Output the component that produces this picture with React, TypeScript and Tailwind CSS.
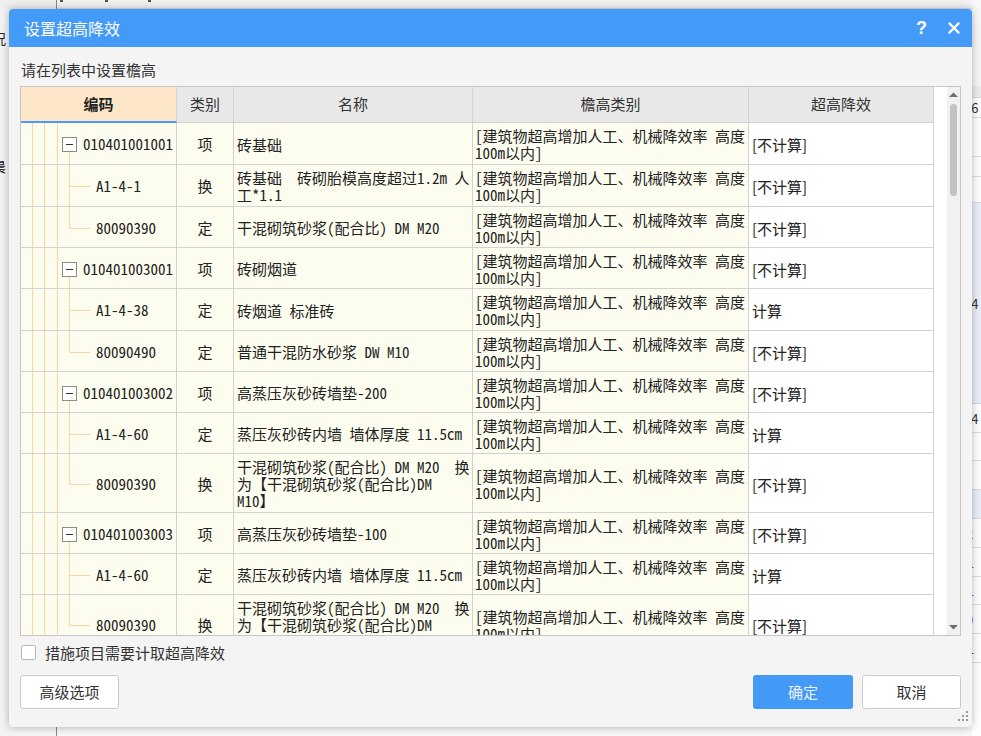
import React from 'react';

type Row = {
  t: 'p' | 'c' | 'l';
  code: string;
  cat: string;
  name: string[];
  eff: string;
  h: number;
};

const ROWS: Row[] = [
  { t: 'p', code: '010401001001', cat: '项', name: ['砖基础'], eff: '[不计算]', h: 42 },
  { t: 'c', code: 'A1-4-1', cat: '换', name: ['砖基础  砖砌胎模高度超过1.2m 人', '工*1.1'], eff: '[不计算]', h: 42 },
  { t: 'l', code: '80090390', cat: '定', name: ['干混砌筑砂浆(配合比) DM M20'], eff: '[不计算]', h: 41 },
  { t: 'p', code: '010401003001', cat: '项', name: ['砖砌烟道'], eff: '[不计算]', h: 41 },
  { t: 'c', code: 'A1-4-38', cat: '定', name: ['砖烟道 标准砖'], eff: '计算', h: 42 },
  { t: 'l', code: '80090490', cat: '定', name: ['普通干混防水砂浆 DW M10'], eff: '[不计算]', h: 41 },
  { t: 'p', code: '010401003002', cat: '项', name: ['高蒸压灰砂砖墙垫-200'], eff: '[不计算]', h: 41 },
  { t: 'c', code: 'A1-4-60', cat: '定', name: ['蒸压灰砂砖内墙 墙体厚度 11.5cm'], eff: '计算', h: 41 },
  {
    t: 'l',
    code: '80090390',
    cat: '换',
    name: ['干混砌筑砂浆(配合比) DM M20  换', '为【干混砌筑砂浆(配合比)DM', 'M10】'],
    eff: '[不计算]',
    h: 59,
  },
  { t: 'p', code: '010401003003', cat: '项', name: ['高蒸压灰砂砖墙垫-100'], eff: '[不计算]', h: 41 },
  { t: 'c', code: 'A1-4-60', cat: '定', name: ['蒸压灰砂砖内墙 墙体厚度 11.5cm'], eff: '计算', h: 41 },
  {
    t: 'l',
    code: '80090390',
    cat: '换',
    name: ['干混砌筑砂浆(配合比) DM M20  换', '为【干混砌筑砂浆(配合比)DM', 'M10】'],
    eff: '[不计算]',
    h: 59,
  },
];

const HCLS: Record<number, string> = {
  41: 'h-[41px]',
  42: 'h-[42px]',
  59: 'h-[59px]',
};

const LINE = '#fdd49b';

function TreeSvg({ t, h }: { t: Row['t']; h: number }) {
  const ih = h - 1;
  const c = Math.floor(ih / 2) + 1.5;
  const w = t === 'p' ? 62 : 75;
  return (
    <svg width={w} height={ih} className="shrink-0 block">
      <line x1={11.5} y1={0} x2={11.5} y2={ih} stroke={LINE} strokeWidth={1} />
      <line x1={23.5} y1={0} x2={23.5} y2={ih} stroke={LINE} strokeWidth={1} />
      <line x1={36.5} y1={0} x2={36.5} y2={ih} stroke={LINE} strokeWidth={1} />
      {t === 'p' ? (
        <>
          <line x1={48.5} y1={c + 7} x2={48.5} y2={ih} stroke={LINE} strokeWidth={1} />
          <rect x={41.5} y={c - 7} width={14} height={14} fill="#ffffff" stroke="#8c8c8c" strokeWidth={1} />
          <line x1={45} y1={c} x2={52} y2={c} stroke="#333333" strokeWidth={1} />
        </>
      ) : (
        <>
          <line x1={48.5} y1={0} x2={48.5} y2={t === 'l' ? c : ih} stroke={LINE} strokeWidth={1} />
          <line x1={48.5} y1={c} x2={69} y2={c} stroke={LINE} strokeWidth={1} />
        </>
      )}
    </svg>
  );
}

const MONO = "font-['Noto_Sans_Mono_CJK_SC','Noto_Sans_CJK_SC',monospace]";

function TableRow({ r }: { r: Row }) {
  return (
    <div className={`flex ${HCLS[r.h]} border-b border-[#d2d2d2] text-[15px] text-[#222]`}>
      <div className="w-[156px] shrink-0 flex items-stretch border-r border-[#d2d2d2] bg-[#fdfdef]">
        <TreeSvg t={r.t} h={r.h} />
        <div className={`flex items-center pt-[2px] whitespace-nowrap ${MONO}`}>{r.code}</div>
      </div>
      <div className="w-[57px] shrink-0 flex items-center justify-center pt-[2px] border-r border-[#d2d2d2] bg-[#fdfdef]">
        {r.cat}
      </div>
      <div
        className={`w-[239px] shrink-0 flex flex-col justify-center pl-[3px] pt-[1px] leading-[17px] border-r border-[#d2d2d2] bg-[#fdfdef] whitespace-pre ${MONO}`}
      >
        {r.name.map((n, i) => (
          <div key={i}>{n}</div>
        ))}
      </div>
      <div
        className={`w-[276px] shrink-0 flex flex-col justify-center pl-[2px] pt-[1px] leading-[17px] border-r border-[#d2d2d2] bg-[#fdfdef] whitespace-pre ${MONO}`}
      >
        <div>[建筑物超高增加人工、机械降效率 高度</div>
        <div>100m以内]</div>
      </div>
      <div className="w-[185px] shrink-0 flex items-center pl-[3px] pt-[4px] border-r border-[#d2d2d2] bg-white">
        {r.eff}
      </div>
    </div>
  );
}

function RightStrip() {
  return (
    <div className="w-[9px] flex flex-col text-[13px] leading-none text-[#333] overflow-hidden">
      <div className="h-[86px] bg-[#f7f7f7]" />
      <div className="h-[12px] bg-[#ececec] border-b border-[#d6d6d6]" />
      <div className="h-[20px] border-b border-[#dcdcdc] flex items-center -ml-[8px]">96</div>
      <div className="h-[39px] border-b border-[#dcdcdc]" />
      <div className="h-[20px] border-b border-[#dcdcdc]" />
      <div className="h-[26px] border-b border-[#dcdcdc]" />
      <div className="h-[201px] bg-[#e9eef8] border-b border-[#d0d6e2] flex items-center -ml-[8px]">04</div>
      <div className="h-[29px] border-b border-[#dcdcdc] flex items-center -ml-[8px]">04</div>
      <div className="h-[28px] border-b border-[#dcdcdc]" />
      <div className="h-[29px] border-b border-[#dcdcdc]" />
      <div className="h-[29px] bg-[#e9eef8] border-b border-[#dcdcdc]" />
      <div className="h-[29px] border-b border-[#dcdcdc] flex items-center -ml-[6px]">2</div>
      <div className="h-[29px] border-b border-[#dcdcdc] flex items-center -ml-[5px] text-[#9b30c0]">1</div>
      <div className="h-[28px] border-b border-[#dcdcdc] flex items-center -ml-[5px] text-[#9b30c0]">1</div>
      <div className="h-[29px] border-b border-[#dcdcdc] flex items-center -ml-[6px] text-[#9b30c0]">0</div>
      <div className="h-[29px] border-b border-[#dcdcdc] flex items-center -ml-[5px]">1</div>
      <div className="flex-1" />
    </div>
  );
}

export default function App() {
  return (
    <div className="relative w-[981px] h-[736px] overflow-hidden bg-white font-['Noto_Sans_CJK_SC',sans-serif] text-[#333]">
      {/* background application */}
      <div className="flex h-full">
        <div className="w-[57px] shrink-0 border-r border-[#8a8a8a] bg-[#f4f4f4] flex flex-col text-[14px] text-[#222]">
          <div className="h-[9px] bg-[#efefef]" />
          <div className="h-[20px]" />
          <div className="h-[18px] -ml-[8px] leading-[18px]">况</div>
          <div className="h-[110px]" />
          <div className="h-[18px] -ml-[8px] leading-[18px]">晨</div>
        </div>
        <div className="flex-1 flex flex-col">
          <div className="h-[9px] bg-[#f3f3f3] border-b border-[#dedede] flex">
            <div className="w-[3px]" />
            <div className="w-[3px] h-[2px] bg-[#555]" />
            <div className="w-[42px]" />
            <div className="w-[3px] h-[2px] bg-[#555]" />
            <div className="w-[40px]" />
            <div className="w-[3px] h-[2px] bg-[#555]" />
          </div>
          <div className="flex-1 bg-[#f7f7f7]" />
        </div>
        <RightStrip />
      </div>

      {/* dialog */}
      <div className="absolute left-[9px] top-[9px] w-[963px] h-[718px] flex flex-col rounded-[4px] bg-[#f4f4f4] shadow-[0_0_8px_rgba(0,0,0,0.3)]">
        <div className="h-[38px] shrink-0 flex items-center rounded-t-[4px] bg-[#439af7] pl-[15px] pr-[12px] text-white">
          <div className="text-[16px]">设置超高降效</div>
          <div className="ml-auto flex items-center gap-[21px]">
            <span className="font-['Liberation_Sans',sans-serif] font-bold text-[18px] leading-none">?</span>
            <svg width="12" height="12" viewBox="0 0 12 12">
              <path d="M1.5 1.5 L10.5 10.5 M10.5 1.5 L1.5 10.5" stroke="#ffffff" strokeWidth="2.4" strokeLinecap="round" />
            </svg>
          </div>
        </div>

        <div className="flex-1 flex flex-col px-[11px] pt-[13px]">
          <div className="h-[20px] leading-[20px] text-[15px] pl-[1px] text-[#333]">请在列表中设置檐高</div>

          <div className="mt-[6px] h-[550px] shrink-0 flex border border-[#c6c6c6] bg-white overflow-hidden">
            <div className="w-[926px] shrink-0 flex flex-col">
              <div className="flex h-[36px] shrink-0 text-[15px] text-[#333]">
                <div className="w-[156px] shrink-0 flex items-center justify-center font-bold text-[#222] bg-[#fee7c9] border-r border-[#d2d2d2] border-b-2 border-b-[#4a9af6]">
                  编码
                </div>
                <div className="w-[57px] shrink-0 flex items-center justify-center bg-[#e8e8e8] border-r border-b border-[#d2d2d2]">
                  类别
                </div>
                <div className="w-[239px] shrink-0 flex items-center justify-center bg-[#e8e8e8] border-r border-b border-[#d2d2d2]">
                  名称
                </div>
                <div className="w-[276px] shrink-0 flex items-center justify-center bg-[#e8e8e8] border-r border-b border-[#d2d2d2]">
                  檐高类别
                </div>
                <div className="w-[185px] shrink-0 flex items-center justify-center bg-[#e8e8e8] border-r border-b border-[#d2d2d2]">
                  超高降效
                </div>
              </div>
              <div className="w-[913px]">
                {ROWS.map((r, i) => (
                  <TableRow key={i} r={r} />
                ))}
              </div>
            </div>
            <div className="w-[13px] shrink-0 flex flex-col items-center bg-[#f1f1f1]">
              <svg width="9" height="6" viewBox="0 0 9 6" className="mt-[5px]">
                <path d="M0 5 L4.5 0.5 L9 5 Z" fill="#6e6e6e" />
              </svg>
              <div className="mt-[6px] w-[7px] h-[92px] rounded-full bg-[#c3c3c3]" />
              <div className="flex-1" />
              <svg width="9" height="6" viewBox="0 0 9 6" className="mb-[5px]">
                <path d="M0 1 L4.5 5.5 L9 1 Z" fill="#6e6e6e" />
              </svg>
            </div>
          </div>

          <div className="mt-[8px] h-[16px] flex items-center gap-[9px]">
            <div className="ml-[1px] w-[15px] h-[15px] rounded-[2px] border border-[#b9b9b9] bg-white" />
            <span className="text-[15px] text-[#333] leading-none">措施项目需要计取超高降效</span>
          </div>

          <div className="mt-[15px] flex items-center">
            <button className="w-[99px] h-[34px] rounded-[3px] border border-[#c9c9c9] bg-white text-[15px] text-[#333]">
              高级选项
            </button>
            <button className="ml-auto w-[100px] h-[34px] rounded-[3px] bg-[#4399f6] text-[15px] text-[#eaf3ff]">
              确定
            </button>
            <button className="ml-[9px] w-[99px] h-[34px] rounded-[3px] border border-[#c9c9c9] bg-white text-[15px] text-[#333]">
              取消
            </button>
          </div>
        </div>

        <svg width="12" height="10" viewBox="0 0 12 10" className="absolute right-[3px] bottom-[6px]">
          <rect x="9" y="0" width="2" height="2" fill="#9a9a9a" />
          <rect x="5" y="4" width="2" height="2" fill="#9a9a9a" />
          <rect x="9" y="4" width="2" height="2" fill="#9a9a9a" />
          <rect x="1" y="8" width="2" height="2" fill="#9a9a9a" />
          <rect x="5" y="8" width="2" height="2" fill="#9a9a9a" />
          <rect x="9" y="8" width="2" height="2" fill="#9a9a9a" />
        </svg>
      </div>
    </div>
  );
}
